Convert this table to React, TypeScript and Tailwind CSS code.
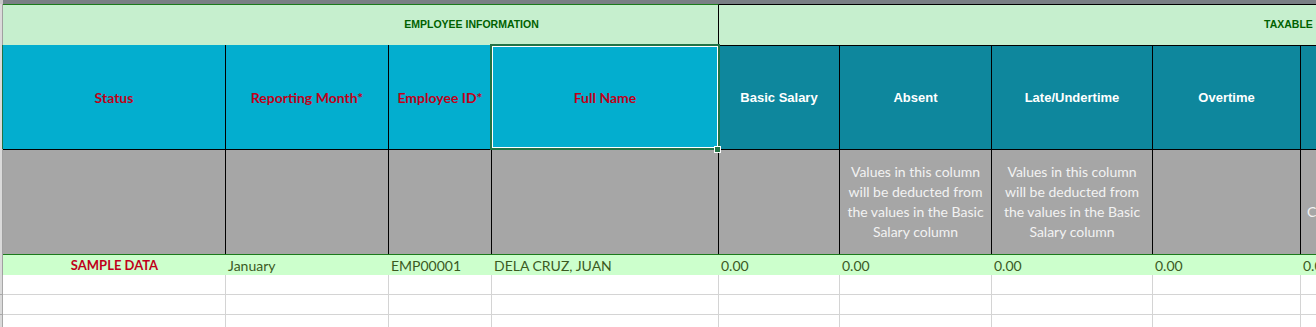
import React from 'react';

// column widths include the 1px right border (col 9 takes the rest)
const colW = [
  'w-[223px]',
  'w-[163px]',
  'w-[103px]',
  'w-[227px]',
  'w-[121px]',
  'w-[152px]',
  'w-[161px]',
  'w-[148px]',
];

const calibri = "font-['Lato','Open_Sans',sans-serif]";
const arial = "font-['Liberation_Sans',Arial,sans-serif]";

function LeftStrip({ className = '' }: { className?: string }) {
  return <div className={`w-[3px] shrink-0 bg-[#dadada] border-r border-[#a0a0a0] ${className}`} />;
}

const note = (
  <>
    Values in this column
    <br />
    will be deducted from
    <br />
    the values in the Basic
    <br />
    Salary column
  </>
);

export default function App() {
  const blueHeaders = ['Status', 'Reporting Month*', 'Employee ID*'];
  const tealHeaders = ['Basic Salary', 'Absent', 'Late/Undertime', 'Overtime'];
  const sample = ['January', 'EMP00001', 'DELA CRUZ, JUAN', '0.00', '0.00', '0.00', '0.00'];

  return (
    <div className="w-[1316px] h-[327px] overflow-hidden bg-white">
      {/* column header edge */}
      <div className="flex h-[4px]">
        <div className="w-[3px] bg-[#c8c8c8]" />
        <div className="flex-1 bg-[#7a7f85]" />
      </div>

      {/* Group header row */}
      <div className="flex h-[41px]">
        <LeftStrip />
        <div
          className={`w-[716px] shrink-0 border-t border-r border-t-[#1b7a1b] border-r-black bg-[#c6efce] flex items-center justify-center pl-[222px] ${arial} text-[10.5px] font-bold text-[#006100]`}
        >
          EMPLOYEE INFORMATION
        </div>
        <div
          className={`flex-1 border-t border-black bg-[#c6efce] flex items-center pl-[545px] whitespace-nowrap overflow-hidden ${arial} text-[10.5px] font-bold text-[#006100]`}
        >
          TAXABLE
        </div>
      </div>

      {/* Column titles */}
      <div className="flex h-[104px]">
        <LeftStrip className="!border-[#217346]" />
        {blueHeaders.map((h, i) => (
          <div
            key={h}
            className={`${colW[i]} shrink-0 border-r border-black bg-[#03aecf] flex items-center justify-center pt-[1px] ${calibri} text-[14px] font-bold text-[#c0001a]`}
          >
            {h}
          </div>
        ))}
        <div
          className={`${colW[3]} shrink-0 relative border-r border-black bg-[#03aecf] flex items-center justify-center pt-[1px] ${calibri} text-[14px] font-bold text-[#c0001a]`}
        >
          Full Name
          {/* active cell selection */}
          <div className="absolute -left-[2px] -top-[1px] -right-[2px] -bottom-[1px] border-2 border-[#217346] shadow-[inset_0_0_0_1px_white] pointer-events-none" />
          <div className="absolute -right-[3px] -bottom-[4px] w-[7px] h-[7px] bg-[#217346] border border-white z-10" />
        </div>
        {tealHeaders.map((h, i) => (
          <div
            key={h}
            className={`${colW[i + 4]} shrink-0 border-t border-r border-black bg-[#0e879d] flex items-center justify-center ${arial} text-[13px] font-bold text-white`}
          >
            {h}
          </div>
        ))}
        <div className="flex-1 border-t border-black bg-[#0e879d]" />
      </div>

      {/* Notes row */}
      <div className="flex h-[105px]">
        <LeftStrip />
        {colW.map((w, i) => (
          <div
            key={w}
            className={`${w} shrink-0 border-t border-r border-black bg-[#a6a6a6] flex items-center justify-center text-center leading-[20px] whitespace-nowrap ${calibri} text-[14px] text-[#f2f2f2]`}
          >
            {i === 5 || i === 6 ? note : null}
          </div>
        ))}
        <div
          className={`flex-1 border-t border-black bg-[#a6a6a6] flex flex-col justify-center pl-[6px] leading-[20px] whitespace-nowrap ${calibri} text-[14px] text-[#f2f2f2]`}
        >
          <span>&nbsp;</span>
          <span>C</span>
        </div>
      </div>

      {/* Sample data row */}
      <div className={`flex h-[21px] ${calibri} text-[14px]`}>
        <LeftStrip />
        <div className="flex-1 flex border-t border-[#1b7a1b] bg-[#ccffcc] leading-[19px] pt-[1px]">
          <div className={`${colW[0]} shrink-0 text-center font-bold text-[13px] text-[#c0001a]`}>SAMPLE DATA</div>
          {sample.map((v, i) => (
            <div key={i} className={`${colW[i + 1]} shrink-0 pl-[2px] text-[#3b5a1f] whitespace-nowrap`}>
              {v}
            </div>
          ))}
          <div className="flex-1 pl-[2px] text-[#3b5a1f] whitespace-nowrap overflow-hidden">0.0</div>
        </div>
      </div>

      {/* Empty rows */}
      {[0, 1, 2].map((r) => (
        <div key={r} className="flex h-[20px]">
          <div className="w-[3px] shrink-0 bg-[#dadada] border-r border-b border-[#a8a8a8]" />
          {colW.map((w) => (
            <div key={w} className={`${w} shrink-0 border-r border-b border-[#d4d4d4]`} />
          ))}
          <div className="flex-1 border-b border-[#d4d4d4]" />
        </div>
      ))}
    </div>
  );
}
